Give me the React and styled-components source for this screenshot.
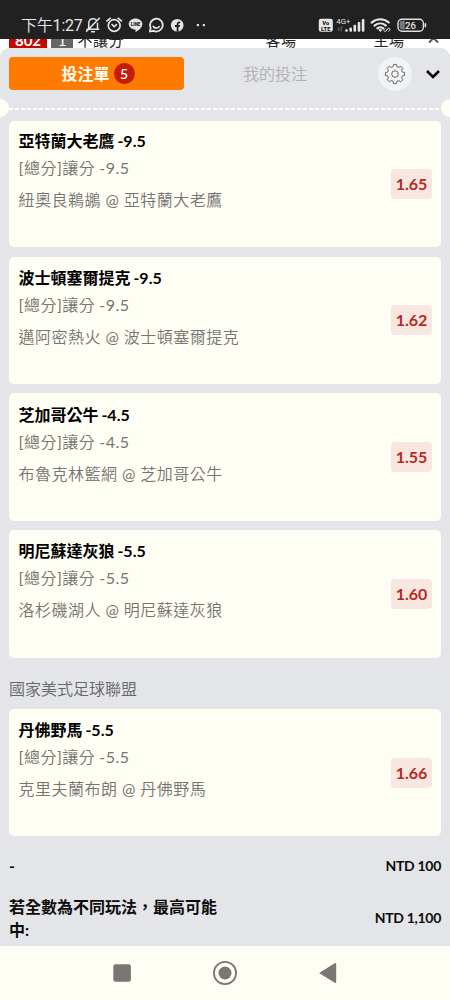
import styled, { createGlobalStyle } from "styled-components";

const cards = [
  { title: "亞特蘭大老鷹 -9.5", market: "[總分]讓分 -9.5", match: "紐奧良鵜鶘 @ 亞特蘭大老鷹", odds: "1.65" },
  { title: "波士頓塞爾提克 -9.5", market: "[總分]讓分 -9.5", match: "邁阿密熱火 @ 波士頓塞爾提克", odds: "1.62" },
  { title: "芝加哥公牛 -4.5", market: "[總分]讓分 -4.5", match: "布魯克林籃網 @ 芝加哥公牛", odds: "1.55" },
  { title: "明尼蘇達灰狼 -5.5", market: "[總分]讓分 -5.5", match: "洛杉磯湖人 @ 明尼蘇達灰狼", odds: "1.60" },
];

const football = {
  title: "丹佛野馬 -5.5",
  market: "[總分]讓分 -5.5",
  match: "克里夫蘭布朗 @ 丹佛野馬",
  odds: "1.66",
};

function BetCard({ bet, first }) {
  return (
    <Card $first={first}>
      <CardText $first={first}>
        <Title>{bet.title}</Title>
        <Market>{bet.market}</Market>
        <Match>{bet.match}</Match>
      </CardText>
      <Odds>{bet.odds}</Odds>
    </Card>
  );
}

// outline of a cog with 8 rounded teeth
function gearPath(cx, cy) {
  const pts = [];
  for (let i = 0; i < 8; i++) {
    const a = (i * Math.PI) / 4 - Math.PI / 2;
    [
      [-0.26, 7.6],
      [-0.15, 9.7],
      [0.15, 9.7],
      [0.26, 7.6],
    ].forEach(([d, r]) => {
      pts.push(`${(cx + r * Math.cos(a + d)).toFixed(2)} ${(cy + r * Math.sin(a + d)).toFixed(2)}`);
    });
  }
  return `M${pts.join("L")}Z`;
}

function StatusIcons() {
  return (
    <svg width="126" height="20" viewBox="84 15 126 20" fill="none" stroke="#e4e4e4" strokeWidth="1.5">
      {/* muted bell */}
      <path d="M86.5 29.3h12.8M88.7 28.8v-5.2c0-3 1.8-4.9 4.4-4.9 1.6 0 2.7.6 3.3 1.5M97.5 22.8v6M91 31.8h4M86.2 31.6 99.8 17.8" />
      {/* alarm */}
      <circle cx="114.2" cy="25.5" r="5.9" strokeWidth="1.7" />
      <path d="M106.4 21.3l4.3-3.5M122 21.3l-4.3-3.5M111.6 24.2l2.6 2.4 2.8-2.4" strokeWidth="1.7" />
      {/* LINE */}
      <path
        d="M135.5 18.4c3.9 0 6.9 2.5 6.9 5.6 0 3.7-4.3 6.7-6.9 8.2v-2.6c-3.9-.2-6.8-2.6-6.8-5.6 0-3.1 3-5.6 6.8-5.6z"
        fill="#e4e4e4"
        stroke="none"
      />
      <text x="135.6" y="26" fill="#222" stroke="none" fontSize="4.6" fontWeight="900" textAnchor="middle" fontFamily="Roboto">LINE</text>
      {/* chat */}
      <path d="M149.9 31.4l.7-3.6a6.4 6.4 0 1 1 2.9 3zM153 25.8c1.2 3.2 5.4 3 6.6.2" strokeWidth="1.8" />
      {/* facebook */}
      <circle cx="177.2" cy="25.3" r="6.3" fill="#e4e4e4" stroke="none" />
      <path d="M177.6 31.8v-7.4c0-1.5.8-2.2 2.6-2M175 26h4.8" stroke="#222" strokeWidth="1.8" />
      <rect x="196.8" y="24" width="2.2" height="2.2" fill="#ddd" stroke="none" />
      <rect x="202.8" y="24" width="2.2" height="2.2" fill="#ddd" stroke="none" />
    </svg>
  );
}

function SignalIcons() {
  return (
    <svg width="110" height="20" viewBox="318 15 110 20" fill="#e8e8e8" fontFamily="Roboto">
      <rect x="318.8" y="18.8" width="14" height="13" rx="2.2" />
      <text x="325.8" y="24.9" fill="#222" fontSize="5.8" fontWeight="900" textAnchor="middle">Vo</text>
      <text x="325.8" y="30.6" fill="#222" fontSize="5.8" fontWeight="900" textAnchor="middle">LTE</text>
      <text x="336.3" y="23.8" fontSize="7.8">4G+</text>
      <path d="M339 27v4.4M337.6 29.5h1.4M341.3 31.4V27h1.6" fill="none" stroke="#777" strokeWidth=".8" />
      <rect x="345.2" y="29.2" width="2.6" height="2.5" rx="1" />
      <rect x="349.4" y="27.4" width="2.6" height="4.3" rx="1" />
      <rect x="353.5" y="24.8" width="2.6" height="6.9" rx="1" />
      <rect x="357.7" y="22" width="2.6" height="9.7" rx="1" />
      <rect x="361.8" y="19" width="2.6" height="12.7" rx="1" />
      {/* wifi with link */}
      <g fill="none" stroke="#e8e8e8" strokeLinecap="round">
        <path d="M371.6 22.6c5-4.4 12.4-4.4 17.2 0M374.5 25.6c3.5-2.9 8.1-2.9 11.4 0M377.3 28.4c1.9-1.5 4.1-1.5 6 0" strokeWidth="2.1" />
        <path d="M386.2 30.4l1.8-2c1-1 2.8.5 1.7 1.7l-1.2 1.3M387.7 29.2l-1.7 1.9c-1.2 1.2-2.9-.3-1.8-1.5l.9-1" strokeWidth=".9" />
      </g>
      <path d="M378.2 29.7q2-1.5 4.2 0l-2.1 2.3z" />
      {/* battery */}
      <rect x="398" y="19.2" width="25.4" height="12" rx="4" fill="none" stroke="#e0e0e0" strokeWidth="1.4" />
      <path d="M401.5 20.8h3.3v8.8h-3.3q-1.8-.3-1.8-2.2V23q0-1.9 1.8-2.2z" fill="#777" />
      <rect x="424.6" y="23" width="1.6" height="4.4" rx=".8" />
      <text x="410.4" y="28.6" fontSize="9.5" fontWeight="500" textAnchor="middle">26</text>
    </svg>
  );
}

export default function App() {
  return (
    <Page>
      <GlobalStyle />
      <StatusBar>
        <Clock>下午1:27</Clock>
        <StatusIcons />
        <Spacer />
        <SignalIcons />
      </StatusBar>
      <Behind>
        <Chip $bg="#c40808" $width="38px">802</Chip>
        <Chip $bg="#666" $width="22px" $light>1</Chip>
        <BehindText $width="188px">不讓分</BehindText>
        <BehindText $width="108px">客場</BehindText>
        <BehindText $width="54px">主場</BehindText>
        <svg width="14" height="14" viewBox="0 0 14 14" fill="none" stroke="#555" strokeWidth="2">
          <path d="M2 8.5l4.5-4.5L11 8.5" />
        </svg>
      </Behind>
      <Panel>
        <Tabs>
          <ActiveTab>
            投注單<Count>5</Count>
          </ActiveTab>
          <Tab>我的投注</Tab>
          <RoundButton>
            <svg width="24" height="24" viewBox="0 0 24 24" fill="none" stroke="#555" strokeWidth=".9" strokeLinejoin="round">
              <path d={gearPath(12, 12)} />
              <circle cx="12" cy="12" r="3.3" />
            </svg>
          </RoundButton>
          <svg width="16" height="12" viewBox="0 0 16 12" fill="none" stroke="#000" strokeWidth="2.6">
            <path d="M2 3l6 6 6-6" />
          </svg>
        </Tabs>
        <Divider>
          <Notch />
          <Dots />
          <Notch />
        </Divider>
        <List>
          {cards.map((bet, i) => (
            <BetCard key={bet.title} bet={bet} first={i === 0} />
          ))}
        </List>
        <League>國家美式足球聯盟</League>
        <List>
          <BetCard bet={football} />
        </List>
        <Total $height="58.4px">
          <TotalLabel>-</TotalLabel>
          <Amount>NTD 100</Amount>
        </Total>
        <Total $height="46px">
          <TotalLabel>若全數為不同玩法，最高可能中:</TotalLabel>
          <Amount>NTD 1,100</Amount>
        </Total>
      </Panel>
      <NavBar>
        <svg width="20" height="20" viewBox="0 0 20 20">
          <rect x="1.3" y="1.2" width="17.6" height="17.6" rx="2.4" fill="#797773" />
        </svg>
        <svg width="26" height="26" viewBox="0 0 26 26">
          <circle cx="13" cy="13" r="11.1" fill="none" stroke="#797773" strokeWidth="1.8" />
          <circle cx="13" cy="13" r="6.5" fill="#797773" />
        </svg>
        <svg width="20" height="24" viewBox="0 0 20 24">
          <path d="M2.2 12L17.5 2.7v18.6z" fill="#797773" stroke="#797773" strokeWidth="1.4" strokeLinejoin="round" />
        </svg>
      </NavBar>
    </Page>
  );
}

const GlobalStyle = createGlobalStyle`
  * {
    box-sizing: border-box;
  }
  body {
    margin: 0;
    font-family: Lato, "Noto Sans CJK TC", sans-serif;
  }
  svg {
    display: block;
    flex-shrink: 0;
  }
`;

const thinFont = `Lato, "Noto Sans CJK TC DemiLight", "Noto Sans CJK TC", sans-serif`;

const Page = styled.div`
  display: flex;
  flex-direction: column;
  width: 450px;
  height: 1000px;
  overflow: hidden;
  background: #fff;
`;

const StatusBar = styled.div`
  display: flex;
  align-items: flex-start;
  height: 39px;
  flex-shrink: 0;
  padding: 15px 22px 0 21px;
  background: #212121;
`;

const Clock = styled.div`
  width: 63px;
  padding-top: 1px;
  font: 400 16px/20px Roboto, "Noto Sans CJK TC DemiLight", "Noto Sans CJK TC", sans-serif;
  letter-spacing: -0.2px;
  color: #e6e6e6;
  white-space: nowrap;
`;

const Spacer = styled.div`
  flex: 1;
`;

const Behind = styled.div`
  display: flex;
  align-items: flex-end;
  height: 9px;
  flex-shrink: 0;
  padding-left: 9px;
  overflow: hidden;
  background: #fff;
`;

const Chip = styled.div`
  width: ${(p) => p.$width};
  height: 18px;
  margin-right: 4px;
  background: ${(p) => p.$bg};
  color: #fff;
  font-size: 15px;
  font-weight: ${(p) => (p.$light ? 400 : 700)};
  line-height: 21px;
  text-align: center;
`;

const BehindText = styled.div`
  width: ${(p) => p.$width};
  height: 18px;
  padding-left: 0.5px;
  font-size: 15px;
  line-height: 21px;
  letter-spacing: 0.5px;
  color: #222;
`;

const Panel = styled.div`
  flex: 1;
  min-height: 0;
  background: #e4e5e8;
  border-radius: 9px 9px 0 0;
  overflow: hidden;
`;

const Tabs = styled.div`
  display: flex;
  align-items: center;
  height: 51px;
  padding: 0 9px;
`;

const ActiveTab = styled.div`
  display: flex;
  align-items: center;
  justify-content: center;
  gap: 4px;
  width: 175px;
  height: 33px;
  padding-left: 3px;
  border-radius: 4px;
  background: #ff7a00;
  color: #fffdf3;
  font-size: 16px;
  font-weight: 700;
  line-height: 32px;
`;

const Count = styled.span`
  width: 21px;
  height: 21px;
  border-radius: 50%;
  background: #c51a0c;
  font-size: 14px;
  font-weight: 600;
  line-height: 21px;
  text-align: center;
`;

const Tab = styled.div`
  width: 182px;
  margin-right: 12px;
  padding-bottom: 1px;
  text-align: center;
  font-size: 16px;
  font-family: ${thinFont};
  color: #b0b1b3;
`;

const RoundButton = styled.div`
  display: flex;
  align-items: center;
  justify-content: center;
  width: 34px;
  height: 34px;
  margin-right: 13px;
  border-radius: 50%;
  background: #f2f3f4;
`;

const Divider = styled.div`
  display: flex;
  align-items: center;
  height: 18px;
  margin: 0 -9px;
`;

const Notch = styled.div`
  width: 18px;
  height: 18px;
  border-radius: 50%;
  background: #fffef5;
`;

const Dots = styled.div`
  flex: 1;
  height: 2px;
  margin-top: 2px;
  background: repeating-linear-gradient(90deg, #fffef5 0 4px, transparent 4px 6px);
`;

const List = styled.div`
  display: flex;
  flex-direction: column;
  gap: 9.3px;
  padding: 0 9px;
`;

const Card = styled.div`
  display: flex;
  align-items: center;
  justify-content: space-between;
  height: ${(p) => (p.$first ? "126px" : "127.5px")};
  margin-top: ${(p) => (p.$first ? "4.4px" : "0")};
  padding: 0 9px 0 9.5px;
  border-radius: 5px;
  background: #fffef5;
`;

const CardText = styled.div`
  align-self: flex-end;
  height: ${(p) => (p.$first ? "119px" : "119.3px")};
  white-space: nowrap;
`;

const Title = styled.div`
  font-size: 16px;
  font-weight: 700;
  line-height: 26px;
  word-spacing: -1px;
  color: #000;
`;

const Market = styled.div`
  font-family: ${thinFont};
  font-size: 16px;
  font-weight: 400;
  line-height: 28px;
  letter-spacing: 0.5px;
  word-spacing: -0.7px;
  color: #767571;
`;

const Match = styled(Market)`
  margin-top: 4px;
  word-spacing: -0.2px;
`;

const Odds = styled.div`
  width: 41px;
  height: 30px;
  border-radius: 4px;
  background: #f8e7e1;
  color: #b52a20;
  font-size: 16px;
  font-weight: 700;
  line-height: 30px;
  text-align: center;
`;

const League = styled.div`
  height: 51px;
  padding: 0 9px;
  font-family: ${thinFont};
  font-size: 16px;
  line-height: 61px;
  color: #66676a;
`;

const Total = styled.div`
  display: flex;
  align-items: center;
  justify-content: space-between;
  height: ${(p) => p.$height};
  padding: 0 9px;
  font-weight: 700;
  color: #0c0c0c;
`;

const TotalLabel = styled.div`
  width: 216px;
  font-size: 16px;
  line-height: 23px;
`;

const Amount = styled.div`
  font-size: 14px;
  letter-spacing: -0.3px;
`;

const NavBar = styled.div`
  display: flex;
  align-items: center;
  justify-content: center;
  gap: 80px;
  height: 54px;
  flex-shrink: 0;
  background: #fffef5;
`;
